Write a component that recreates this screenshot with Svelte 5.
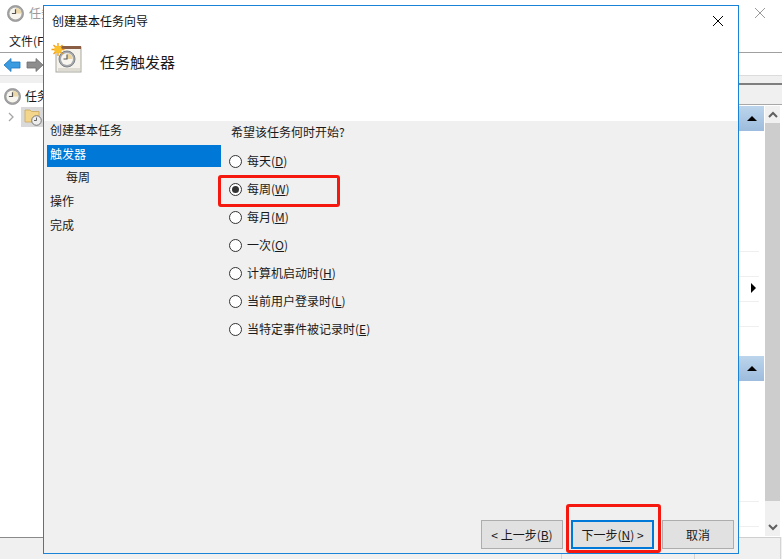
<script>
  const nav = [
    { label: '创建基本任务', cls: '' },
    { label: '触发器', cls: 'active' },
    { label: '每周', cls: 'sub' },
    { label: '操作', cls: '' },
    { label: '完成', cls: '' }
  ];
  const options = [
    { text: '每天', key: 'D', on: false },
    { text: '每周', key: 'W', on: true },
    { text: '每月', key: 'M', on: false },
    { text: '一次', key: 'O', on: false },
    { text: '计算机启动时', key: 'H', on: false },
    { text: '当前用户登录时', key: 'L', on: false },
    { text: '当特定事件被记录时', key: 'E', on: false }
  ];
</script>

{#snippet clock(size)}
  <svg width={size} height={size} viewBox="0 0 16 16">
    <circle cx="8" cy="8" r="7.6" fill="#a3a3a3" stroke="#858585" stroke-width="0.6" />
    <circle cx="8" cy="8" r="5.7" fill="#f7f5ee" />
    <path d="M8 8V2.500A5.500 5.500 0 0 1 13.500 8Z" fill="#ecd8a8" />
    <path d="M8 4v4H4.600" fill="none" stroke="#555" stroke-width="1.100" />
  </svg>
{/snippet}

<div class="desk">
  <div class="back">
    <div class="back-title">
      {@render clock(17)}
      <span>任务</span>
      <svg class="back-close" width="12" height="12" viewBox="0 0 12 12"><path d="M1 1l10 10M11 1L1 11" stroke="#9a9a9a" fill="none" /></svg>
    </div>
    <div class="back-menu">文件(F)</div>
    <div class="back-tools">
      <svg width="18" height="16" viewBox="0 0 18 16"><path d="M1 8l7-6.500v3.500h9v6H8v3.500z" fill="#3a9be0" stroke="#1b76c0" stroke-width="0.8" /></svg>
      <svg width="18" height="16" viewBox="0 0 18 16"><path d="M17 8l-7-6.500v3.500H1v6h9v3.500z" fill="#8d8d8d" stroke="#6e6e6e" stroke-width="0.8" /></svg>
    </div>
    <div class="back-band"></div>
    <div class="back-main">
      <div class="tree">
        <div class="tree-row">
          {@render clock(17)}
          <span>任务</span>
        </div>
        <div class="tree-row second">
          <svg class="chev" width="6" height="10" viewBox="0 0 6 10"><path d="M1 1l4 4-4 4" fill="none" stroke="#a6a6a6" stroke-width="1.300" /></svg>
          <div class="folder">
            <svg width="18" height="18" viewBox="0 0 18 18">
              <path d="M1 2h5l1.500 1.500H15V14H1z" fill="#f3d68c" stroke="#c9a95c" stroke-width="0.8" />
              <circle cx="12.500" cy="12.500" r="4.800" fill="#eee" stroke="#777" />
              <path d="M12.500 9.500V12.500h-2.500" fill="none" stroke="#444" stroke-width="0.8" />
            </svg>
          </div>
        </div>
      </div>
      <div class="actions">
        <div class="act-gap"></div>
        <div class="act-body">
          <div class="act-list">
            <div class="act-head"><span class="tri"></span></div>
            <div class="act-rows top">
              <i></i><i></i><i></i><i></i>
              <b class="play"></b>
            </div>
            <div class="act-head"><span class="tri"></span></div>
            <div class="act-rows low"><i></i><i></i></div>
          </div>
          <div class="scroll">
            <div class="cell up">
              <svg width="10" height="7" viewBox="0 0 10 7"><path d="M1 6l4-4 4 4" fill="none" stroke="#606060" stroke-width="2" /></svg>
            </div>
            <div class="thumb"></div>
            <div class="cell down">
              <svg width="10" height="7" viewBox="0 0 10 7"><path d="M1 1l4 4 4-4" fill="none" stroke="#606060" stroke-width="2" /></svg>
            </div>
          </div>
        </div>
      </div>
    </div>
    <div class="back-status"><span></span><span></span><span></span></div>
  </div>

  <section class="dialog">
    <div class="head">
      <div class="title-row">
        <span>创建基本任务向导</span>
        <svg width="12" height="12" viewBox="0 0 12 12"><path d="M1 1l10 10M11 1L1 11" stroke="#000" fill="none" /></svg>
      </div>
      <div class="hero">
        <svg class="hero-icon" width="32" height="32" viewBox="0 0 32 32">
          <rect x="5" y="4" width="25" height="25" fill="#f4f2ea" stroke="#a8a8a0" />
          <rect x="7" y="25" width="22" height="3" fill="#dddbd2" />
          <rect x="5" y="3" width="25" height="3" fill="#8a5e45" />
          <circle cx="16" cy="16" r="8" fill="#a5a9ad" stroke="#7f8387" />
          <circle cx="16" cy="16" r="6" fill="#f7f5ee" />
          <path d="M16 16V10.500A5.500 5.500 0 0 1 21.500 16Z" fill="#ecd39a" />
          <path d="M16 11.500V16h-3.500" fill="none" stroke="#555" stroke-width="1.100" />
          <g stroke="#f39a12" stroke-width="1.300">
            <path d="M7 0v13M0.500 6.500h13M2.500 2l9 9M11.500 2l-9 9" />
          </g>
          <circle cx="7" cy="6.500" r="3.800" fill="#fbc02d" />
        </svg>
        <span class="hero-text">任务触发器</span>
      </div>
    </div>
    <div class="body">
      <nav class="steps">
        {#each nav as item}
          <div class="step {item.cls}">{item.label}</div>
        {/each}
      </nav>
      <div class="content">
        <p class="question">希望该任务何时开始?</p>
        <div class="options">
          {#each options as o}
            <div class="option" class:marked={o.on}>
              <span class="radio" class:on={o.on}></span>
              <span>{o.text}(<u>{o.key}</u>)</span>
            </div>
          {/each}
        </div>
      </div>
    </div>
    <div class="foot">
      <button class="btn">&lt; 上一步(<u>B</u>)</button>
      <div class="next-wrap">
        <button class="btn default">下一步(<u>N</u>) &gt;</button>
      </div>
      <button class="btn cancel">取消</button>
    </div>
  </section>
</div>

<style>
  :global(body) {
    margin: 0;
    background: #fff;
  }
  .desk {
    position: relative;
    width: 782px;
    height: 559px;
    overflow: hidden;
    font: 12px/16px "Noto Sans CJK SC", "Noto Sans", sans-serif;
    color: #1a1a1a;
  }
  .back {
    width: 782px;
    height: 559px;
    display: flex;
    flex-direction: column;
    background: #fff;
  }
  .back-title {
    height: 32px;
    box-sizing: border-box;
    padding: 5px 0 0 7px;
    display: flex;
    align-items: flex-start;
    gap: 5px;
    color: #9a9a9a;
  }
  .back-close {
    margin-left: auto;
    margin-right: 16px;
    margin-top: 2px;
  }
  .back-menu {
    line-height: 18px;
    padding-left: 9px;
    box-sizing: border-box;
    border-bottom: 1px solid #a0a0a0;
    height: 21px;
  }
  .back-tools {
    height: 22px;
    padding: 2px 0 0 3px;
    box-sizing: border-box;
    display: flex;
    align-items: center;
    gap: 5px;
  }
  .back-band {
    height: 8px;
    background: #f0f0f0;
    border-top: 1px solid #dcdcdc;
    box-sizing: border-box;
  }
  .back-main {
    height: 454px;
    flex: none;
    display: flex;
    justify-content: space-between;
  }
  .tree {
    padding: 2px 0 0 4px;
  }
  .tree-row {
    height: 22px;
    display: flex;
    align-items: center;
    gap: 4px;
  }
  .tree-row.second {
    gap: 7px;
    padding-left: 4px;
    margin-top: -1px;
  }
  .folder {
    width: 24px;
    height: 20px;
    background: #d9d9d9;
    display: flex;
    align-items: center;
    justify-content: center;
  }
  .actions {
    width: 43px;
    display: flex;
    flex-direction: column;
    border-top: 2px solid #7f7f7f;
  }
  .act-gap {
    height: 20px;
    background: #f0f0f0;
    border-bottom: 1px solid #a8a8a8;
    box-sizing: border-box;
    flex: none;
  }
  .act-body {
    height: 431px;
    margin-top: 1px;
    display: flex;
  }
  .act-list {
    flex: 1;
    display: flex;
    flex-direction: column;
  }
  .act-head {
    height: 25px;
    flex: none;
    margin-right: 1px;
    background: linear-gradient(#bcd5ec, #9dbbdc);
    display: flex;
    align-items: center;
    justify-content: center;
  }
  .tri {
    width: 0;
    height: 0;
    border: 5px solid transparent;
    border-top: 0;
    border-bottom: 5px solid #000;
  }
  .act-rows {
    position: relative;
    display: flex;
    flex-direction: column;
    justify-content: flex-end;
    gap: 24px;
    box-sizing: border-box;
  }
  .act-rows.top {
    height: 225px;
    padding-bottom: 29px;
  }
  .act-rows.low {
    height: 156px;
    padding-bottom: 10px;
  }
  .act-rows i {
    display: block;
    height: 1px;
    background: #efefef;
    margin-right: 6px;
  }
  .play {
    position: absolute;
    top: 152px;
    left: 12px;
    width: 0;
    height: 0;
    border: 5px solid transparent;
    border-right: 0;
    border-left: 5px solid #000;
  }
  .scroll {
    width: 15px;
    background: #f0f0f0;
    display: flex;
    flex-direction: column;
    margin: 0 2px 1px 0;
  }
  .cell {
    display: flex;
    justify-content: center;
    flex: none;
  }
  .cell.up {
    height: 17px;
    padding-top: 5px;
    box-sizing: border-box;
  }
  .cell.down {
    height: 35px;
    padding-top: 23px;
    box-sizing: border-box;
  }
  .thumb {
    flex: 1;
    background: #cdcdcd;
  }
  .back-status {
    height: 22px;
    flex: none;
    display: flex;
    background: #f0f0f0;
  }
  .back-status span {
    box-sizing: border-box;
    border-right: 1px solid #d4d4d4;
    border-top: 1px solid #cfcfcf;
    width: 133px;
  }
  .back-status span:first-child {
    width: 562px;
    border-top-color: #8a8a8a;
  }
  .back-status span:last-child {
    width: 86px;
  }

  .dialog {
    position: absolute;
    left: 43px;
    top: 5px;
    width: 696px;
    height: 549px;
    box-sizing: border-box;
    border: 1px solid #1883d7;
    background: #f0f0f0;
    display: flex;
    flex-direction: column;
  }
  .head {
    height: 115px;
    background: #fff;
    flex: none;
  }
  .title-row {
    height: 30px;
    padding: 0 14px 0 8px;
    display: flex;
    align-items: center;
    justify-content: space-between;
    color: #111;
  }
  .hero {
    display: flex;
    align-items: center;
    gap: 17px;
    padding-left: 7px;
    margin-top: 7px;
    height: 32px;
    font-size: 15px;
  }
  .hero-text {
    padding-top: 6px;
  }
  .body {
    flex: 1;
    display: flex;
    min-height: 0;
  }
  .steps {
    width: 174px;
    margin-left: 3px;
    flex: none;
  }
  .step {
    height: 24px;
    line-height: 18px;
    padding-left: 3px;
    box-sizing: border-box;
  }
  .step.active {
    height: 22px;
    line-height: 18px;
    background: #0078d7;
    color: #fff;
    margin-bottom: 1px;
  }
  .step.sub {
    padding-left: 19px;
    line-height: 18px;
  }
  .content {
    padding: 3px 0 0 10px;
  }
  .question {
    margin: 0;
    line-height: 16px;
  }
  .options {
    margin-top: 9px;
    display: flex;
    flex-direction: column;
    gap: 4px;
    margin-left: -5px;
  }
  .option {
    position: relative;
    height: 24px;
    display: flex;
    align-items: center;
    gap: 5px;
    padding-left: 3px;
  }
  .option.marked::after {
    content: "";
    position: absolute;
    left: -8px;
    top: -2px;
    width: 122px;
    height: 32px;
    box-sizing: border-box;
    border: 3px solid #f5180f;
    border-radius: 3px;
  }
  .radio {
    width: 13px;
    height: 13px;
    box-sizing: border-box;
    border: 1px solid #333;
    border-radius: 50%;
    background: #fff;
    position: relative;
  }
  .radio.on::after {
    content: "";
    position: absolute;
    inset: 2px;
    border-radius: 50%;
    background: #333;
  }
  .foot {
    height: 53px;
    flex: none;
    display: flex;
    justify-content: flex-end;
    align-items: flex-start;
    padding: 20px 4px 0 0;
    gap: 8px;
    box-sizing: border-box;
  }
  .btn {
    width: 82px;
    height: 29px;
    box-sizing: border-box;
    border: 1px solid #adadad;
    background: #e1e1e1;
    font: inherit;
    color: #1a1a1a;
    padding: 0;
    display: block;
  }
  .btn.default {
    width: 83px;
    border: 2px solid #0078d7;
  }
  .next-wrap {
    position: relative;
  }
  .next-wrap::after {
    content: "";
    position: absolute;
    left: -5px;
    top: -16px;
    width: 95px;
    height: 49px;
    box-sizing: border-box;
    border: 3px solid #f5180f;
    border-radius: 3px;
    pointer-events: none;
  }
  .btn.cancel {
    width: 72px;
  }
</style>
